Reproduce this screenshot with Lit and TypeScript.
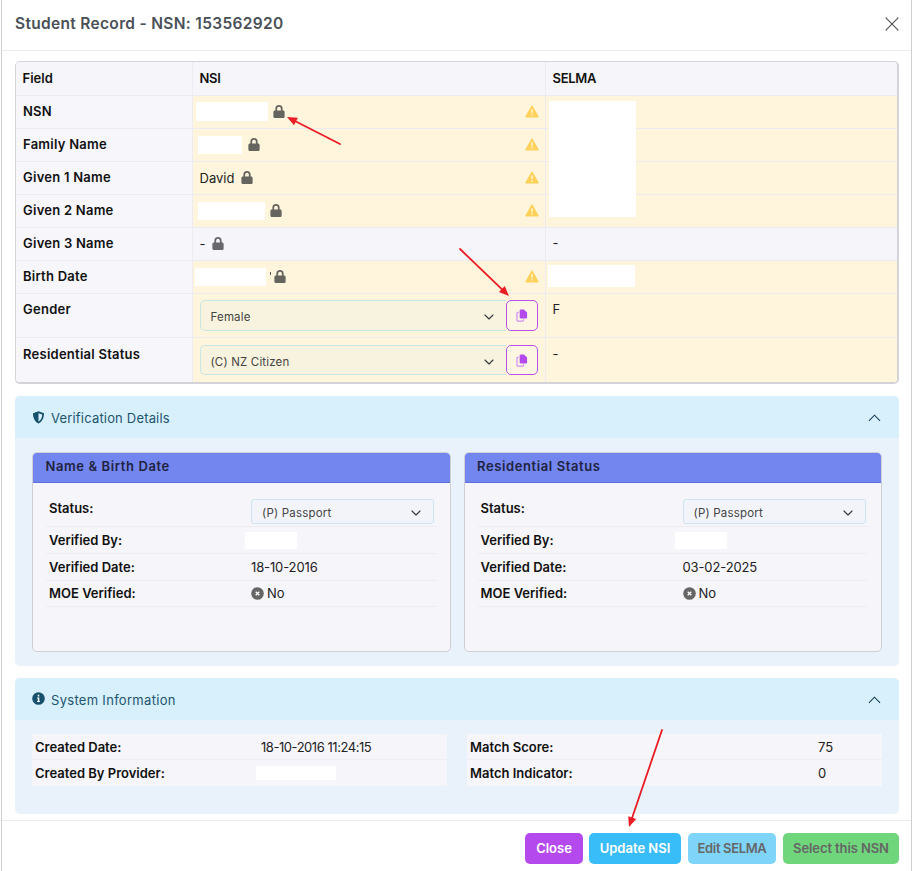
import { LitElement, html, css, svg } from "lit";
import { customElement } from "lit/decorators.js";

const lock = html`<svg class="lock" viewBox="0.9 0.5 10.2 11.8"><path d="M2.700 5.400V3.900a3.300 3.300 0 0 1 6.600 0v1.500h.4c.9 0 1.400.6 1.400 1.400v4.100c0 .9-.6 1.400-1.400 1.400H2.300c-.9 0-1.400-.6-1.400-1.400V6.800c0-.9.6-1.400 1.400-1.400zM4.300 5.400h3.400V3.900a1.700 1.700 0 0 0-3.400 0z"/></svg>`;
const warn = html`<svg class="warn" viewBox="0 0 14 13"><path fill="#ffd159" stroke="#ffd159" stroke-width="1.400" stroke-linejoin="round" d="M7 1.200 13 11.800H1z"/><path fill="#fff" d="M6.400 4.300h1.200l-.1 4h-1zM6.400 9.200h1.200v1.200H6.400z"/></svg>`;
const chevDown = html`<svg class="chev" viewBox="0 0 10 6"><path d="M1 1l4 4 4-4" fill="none" stroke="#343a40" stroke-width="1.100" stroke-linecap="round" stroke-linejoin="round"/></svg>`;
const chevUp = html`<svg class="chevup" viewBox="0 0 14 8"><path d="M1 7l6-6 6 6" fill="none" stroke="#12394f" stroke-width="1.100"/></svg>`;
const copy = html`<svg class="copy" viewBox="0 0 13 14"><path fill="#b44aee" d="M5 .6h3.600L12 3.800v5.400c0 .6-.4 1-1 1H5c-.6 0-1-.4-1-1V1.600c0-.6.4-1 1-1z"/><path fill="none" stroke="#cf8df3" stroke-width="1.300" d="M3 3.600H2c-.6 0-1 .4-1 1v7.400c0 .6.4 1 1 1h5.200c.6 0 1-.4 1-1v-.9"/></svg>`;
const shield = html`<svg class="sec-ic" viewBox="0 0 12 13"><path fill="#17506c" fill-rule="evenodd" d="M6 .3 11.500 2.300c0 4.500-1.500 8.300-5.500 10.300C2 10.600.5 6.800.5 2.300zM6 2.200v8.600c2.500-1.500 3.600-4.200 3.700-7.200z"/></svg>`;
const info = html`<svg class="sec-ic" viewBox="0 0 13 13"><circle cx="6.500" cy="6.500" r="6.300" fill="#17506c"/><path fill="#fff" d="M5.700 2.800h1.600v1.600H5.700zM5.200 5.500h2.100v3.400h.6V10H5.100V8.900h.7V6.600h-.6z"/></svg>`;
const xCircle = html`<svg class="xc" viewBox="0 0 13 13"><circle cx="6.500" cy="6.500" r="6.300" fill="#666"/><path d="M4.700 4.700l3.600 3.600M8.300 4.700 4.700 8.300" stroke="#fff" stroke-width="1.300"/></svg>`;

const arrow = (x1: number, y1: number, x2: number, y2: number) => {
  const a = Math.atan2(y2 - y1, x2 - x1);
  const l = 10, w = 4.2;
  const bx = x2 - l * Math.cos(a), by = y2 - l * Math.sin(a);
  const nx = -Math.sin(a) * w, ny = Math.cos(a) * w;
  return svg`<line x1=${x1} y1=${y1} x2=${bx} y2=${by} stroke="#ea1c24" stroke-width="1.800" stroke-linecap="round"/>
  <path fill="#ea1c24" d="M${x2} ${y2}L${bx + nx} ${by + ny}L${bx - nx} ${by - ny}Z"/>`;
};

@customElement("app-root")
export class AppRoot extends LitElement {
  static styles = css`
    :host { display: block; position: relative; width: 915px; height: 871px; overflow: hidden; background: #fff;
      font-family: Inter, "Open Sans", sans-serif; font-size: 13px; color: #222; }
    * { box-sizing: border-box; }
    .modal { margin-left: 1px; width: 911px; height: 871px; border-left: 1px solid #cfcfcf; border-right: 1px solid #cfcfcf; background: #fff; display: flex; flex-direction: column; }
    .head { height: 51px; flex: none; border-bottom: 1px solid #ececec; display: flex; align-items: center; justify-content: space-between; padding: 0 12px 3px 13px; }
    .head h1 { margin: 0; font-size: 15.500px; font-weight: 600; color: #495057; letter-spacing: .32px; }
    .close { width: 14px; height: 14px; display: block; }
    .body { flex: none; height: 770px; padding: 10px 12px 0 13px; border-bottom: 1px solid #ececec; }
    .tbl { height: 323px; border-radius: 5px; border: 1px solid #d4d3da; border-width: 1px 2px 2px 1px; overflow: hidden; display: grid; grid-template-columns: 177px 353px 1fr; grid-template-rows: 34px repeat(6, 33px) 44px 44px; }
    .c { border-right: 1px solid #ecebf1; border-bottom: 1px solid #ecebf1; padding: 0 6.500px 2px; display: flex; align-items: center; gap: 5px; color: #222; min-width: 0; }
    .c:nth-child(3n) { border-right: 0; }
    .c.last { border-bottom: 0; }
    .f { background: #f6f6fb; font-weight: 600; color: #111; letter-spacing: .25px; padding-left: 7px; }
    .h { background: #f6f5f9; font-weight: 600; color: #111; }
    .hx { letter-spacing: -.3px; }
    .g { background: #f6f5f9; }
    .y { background: #fef5dc; }
    .top { align-items: flex-start; padding-top: 7px; }
    .top.last { padding-top: 8px; }
    .sp { justify-content: space-between; padding-right: 6.500px; padding-bottom: 1px; }
    .lft { display: flex; align-items: center; gap: 5px; }
    .nm { margin-right: 2px; }
    .redact { display: inline-block; background: #fff; }
    .tick { display: inline-block; width: 1px; height: 3px; background: #555; margin: -7px -2px 0 -1px; }
    .lock { width: 12px; height: 13px; fill: #66645e; flex: none; }
    .g .lock { fill: #67676c; }
    .warn { width: 14px; height: 13px; flex: none; }
    .ig { width: 100%; align-items: flex-start; gap: 0; padding-top: 6px; padding-right: 7px; }
    .ig.i2 { padding-top: 7px; }
    .ig.i2 .sel, .ig.i2 .cbtn { height: 30px; }
    .sel { flex: 1; height: 31px; background: #f8f3de; border: 1px solid #c7e6e6; border-right: 0; border-radius: 5px 0 0 5px; display: flex; align-items: center; justify-content: space-between; padding: 3px 12px 0 10px; font-size: 11.500px; color: #444; letter-spacing: .17px; }
    .chev { width: 10px; height: 6px; }
    .cbtn { width: 32px; height: 31px; flex: none; border: 1px solid #b950ee; border-radius: 5px; background: #fdf6e3; display: flex; align-items: center; justify-content: center; }
    .copy { width: 12px; height: 13px; }
    .sec { margin-top: 12px; border-radius: 5px; background: #e9f1fa; overflow: hidden; }
    .sec.v { height: 270px; }
    .sec.s { height: 136px; }
    .sh { height: 42px; background: #d7f0fc; display: flex; align-items: center; justify-content: space-between; padding: 2px 18px 0 17px; color: #1d5570; font-size: 13px; letter-spacing: .18px; }
    .s .sh { padding-top: 1px; letter-spacing: .3px; }
    .sl { display: flex; align-items: center; gap: 6px; }
    .sec-ic { width: 13px; height: 13px; margin-top: -2px; }
    .chevup { width: 13px; height: 8px; }
    .cards { display: grid; grid-template-columns: 418.500px 418.500px; gap: 13px; padding: 14px 17px 0 17px; }
    .card { height: 200px; border: 1px solid #cfcfd4; border-radius: 5px; background: #f6f5f9; overflow: hidden; }
    .ch { height: 30px; background: #7386f0; border-bottom: 1px solid #5a6ee0; padding: 0 12.500px 3px; display: flex; align-items: center; font-weight: 600; color: #1f2340; font-size: 13px; letter-spacing: .6px; }
    .cb { padding: 9px 13px 0; }
    .r { display: grid; grid-template-columns: 202px 1fr; align-items: center; border-bottom: 1px solid #eeedf2; padding: 0 3px; height: 26.500px; color: #222; }
    .r.by { height: 27px; }
    .r.st { height: 35px; align-items: start; padding-top: 7px; }
    .r.st b { margin-top: 1px; }
    .r b { font-weight: 600; color: #111; }
    .dt { letter-spacing: -.12px; }
    .mini { height: 25px; width: 183px; border: 1px solid #cfe3f3; border-radius: 3px; background: #f3f4fa; display: flex; align-items: center; justify-content: space-between; padding: 2px 12px 0 10px; font-size: 11.500px; color: #444; letter-spacing: .2px; }
    .no { display: flex; align-items: center; gap: 3px; }
    .xc { width: 13px; height: 13px; }
    .info { display: grid; grid-template-columns: 415px 415px; gap: 20px; padding: 14px 17px 0 17px; }
    .ib { background: #f6f5f9; }
    .ir { height: 26px; display: grid; align-items: center; padding-left: 3px; border-bottom: 1px solid #efeef3; grid-template-columns: 226px 1fr; color: #222; }
    .ir.rr { grid-template-columns: 348px 1fr; }
    .ir:last-child { border-bottom: 0; }
    .ir b { font-weight: 600; color: #111; }
    .cd { letter-spacing: -.45px; }
    .foot { flex: 1; display: flex; justify-content: flex-end; align-items: flex-start; gap: 6px; padding: 12px 12px 0 0; }
    .btn { height: 31px; border-radius: 5px; display: flex; align-items: center; justify-content: center; padding-bottom: 2px; font-weight: 600; font-size: 13px; }
    .b1 { width: 58px; background: #b44aee; color: #fff; }
    .b2 { width: 92px; background: #38bdf8; color: #fff; }
    .b3 { width: 88px; background: #7fd4fa; color: #666; margin-left: 1px; letter-spacing: -.35px; }
    .b4 { width: 116px; background: #6fd67c; color: #666; margin-left: 1px; letter-spacing: -.1px; }
    .over { position: absolute; background: #fff; }
    .arrows { position: absolute; left: 0; top: 0; width: 915px; height: 871px; pointer-events: none; }
  `;

  private row(label: string, val: unknown, lastWarn = true, cls = "y") {
    return html`<div class="c f">${label}</div>
      <div class="c sp ${cls}"><span class="lft">${val}${lock}</span>${lastWarn ? warn : ""}</div>
      <div class="c ${cls}">${cls === "g" ? "-" : ""}</div>`;
  }

  private card(title: string, date: string) {
    return html`<div class="card">
      <div class="ch">${title}</div>
      <div class="cb">
        <div class="r st"><b>Status:</b><div class="mini"><span>(P) Passport</span>${chevDown}</div></div>
        <div class="r by"><b>Verified By:</b><span></span></div>
        <div class="r"><b>Verified Date:</b><span class="dt">${date}</span></div>
        <div class="r"><b>MOE Verified:</b><span class="no">${xCircle} No</span></div>
      </div>
    </div>`;
  }

  render() {
    const red = (w: number, h: number, ml = 0, mr = 0) =>
      html`<span class="redact" style="width:${w}px;height:${h}px;margin-left:${ml}px;margin-right:${mr}px"></span>`;
    return html`<div class="modal">
      <div class="head">
        <h1>Student Record - NSN: 153562920</h1>
        <svg class="close" viewBox="0 0 14 14"><path d="M.7.700l12.600 12.600M13.300.700.7 13.300" stroke="#555" stroke-width="1.200"/></svg>
      </div>
      <div class="body">
        <div class="tbl">
          <div class="c h">Field</div><div class="c h hx">NSI</div><div class="c h hx">SELMA</div>
          ${this.row("NSN", red(72, 19, -3.5))}
          ${this.row("Family Name", red(44, 18, -1.5, 1))}
          ${this.row("Given 1 Name", html`<span class="nm">David</span>`)}
          ${this.row("Given 2 Name", red(67, 18, -1.5))}
          ${this.row("Given 3 Name", html`<span class="nm">-</span>`, false, "g")}
          ${this.row("Birth Date", html`${red(71, 18, -4.5, 0)}<span class="tick"></span>`)}
          <div class="c f top">Gender</div>
          <div class="c y ig"><div class="sel"><span>Female</span>${chevDown}</div><div class="cbtn">${copy}</div></div>
          <div class="c y top">F</div>
          <div class="c f top last">Residential Status</div>
          <div class="c y ig i2 last"><div class="sel"><span>(C) NZ Citizen</span>${chevDown}</div><div class="cbtn">${copy}</div></div>
          <div class="c y top last">-</div>
        </div>

        <div class="sec v">
          <div class="sh"><span class="sl">${shield}Verification Details</span>${chevUp}</div>
          <div class="cards">${this.card("Name & Birth Date", "18-10-2016")}${this.card("Residential Status", "03-02-2025")}</div>
        </div>

        <div class="sec s">
          <div class="sh"><span class="sl">${info}System Information</span>${chevUp}</div>
          <div class="info">
            <div class="ib">
              <div class="ir"><b>Created Date:</b><span class="cd">18-10-2016 11:24:15</span></div>
              <div class="ir"><b>Created By Provider:</b><span></span></div>
            </div>
            <div class="ib">
              <div class="ir rr"><b>Match Score:</b><span>75</span></div>
              <div class="ir rr"><b>Match Indicator:</b><span>0</span></div>
            </div>
          </div>
        </div>
      </div>
      <div class="foot">
        <div class="btn b1">Close</div>
        <div class="btn b2">Update NSI</div>
        <div class="btn b3">Edit SELMA</div>
        <div class="btn b4">Select this NSN</div>
      </div>
    </div>
    <div class="over" style="left:549px;top:101px;width:87px;height:116px"></div>
    <div class="over" style="left:548px;top:265px;width:87px;height:22px"></div>
    <div class="over" style="left:245px;top:532px;width:52px;height:17px"></div>
    <div class="over" style="left:675px;top:532px;width:52px;height:17px"></div>
    <div class="over" style="left:256px;top:766px;width:80px;height:14px"></div>
    <svg class="arrows" viewBox="0 0 915 871">
      ${arrow(340, 144, 287, 117)}
      ${arrow(460, 249, 509, 296)}
      ${arrow(662, 730, 629, 827)}
    </svg>`;
  }
}
